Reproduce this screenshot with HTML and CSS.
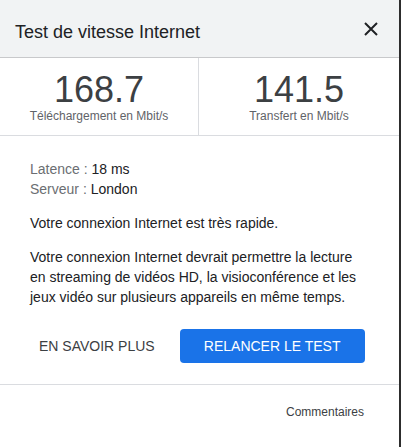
FILE: index.html
```html
<!DOCTYPE html>
<html lang="fr">
<head>
<meta charset="utf-8">
<link rel="stylesheet" href="styles.css">
</head>
<body>
<div class="dialog">
  <header class="head">
    <h1 class="title">Test de vitesse Internet</h1>
    <button class="close" aria-label="Fermer">
      <svg width="14" height="14" viewBox="0 0 14 14"><path d="M1 1L13 13M13 1L1 13" stroke="#202124" stroke-width="2" fill="none"/></svg>
    </button>
  </header>
  <section class="stats">
    <div class="stat">
      <div class="num">168.7</div>
      <div class="unit">Téléchargement en Mbit/s</div>
    </div>
    <div class="stat">
      <div class="num">141.5</div>
      <div class="unit">Transfert en Mbit/s</div>
    </div>
  </section>
  <section class="body">
    <div class="meta">
      <div><span class="lbl">Latence : </span>18 ms</div>
      <div><span class="lbl">Serveur : </span>London</div>
    </div>
    <p class="p">Votre connexion Internet est très rapide.</p>
    <p class="p">Votre connexion Internet devrait permettre la lecture en streaming de vidéos HD, la visioconférence et les jeux vidéo sur plusieurs appareils en même temps.</p>
    <div class="actions">
      <button class="btn-text">EN SAVOIR PLUS</button>
      <button class="btn-primary">RELANCER LE TEST</button>
    </div>
  </section>
  <footer class="foot">
    <span class="feedback">Commentaires</span>
  </footer>
</div>
</body>
</html>
```

FILE: styles.css
```css
* { box-sizing: border-box; }
html, body { margin: 0; padding: 0; background: #fff; }
body {
  font-family: "Liberation Sans", Arial, sans-serif;
  color: #202124;
  width: 401px;
  height: 447px;
  overflow: hidden;
}
.dialog {
  width: 401px;
  height: 447px;
  border-right: 2px solid #2d2d2d;
  display: flex;
  flex-direction: column;
}
.head {
  height: 58px;
  background: #f1f3f4;
  border-bottom: 1px solid #c8c9cb;
  display: flex;
  align-items: center;
  justify-content: space-between;
  padding: 0 21px 0 15px;
}
.title {
  margin: 0;
  font-size: 18px;
  font-weight: normal;
  color: #202124;
  padding-top: 7px;
}
.close {
  border: 0;
  background: none;
  padding: 0;
  width: 14px;
  height: 14px;
  display: block;
  margin-top: 0;
}
.close svg { display: block; }
.stats {
  display: grid;
  grid-template-columns: 199px 1fr;
  height: 78px;
  border-bottom: 1px solid #dadce0;
}
.stat {
  display: flex;
  flex-direction: column;
  align-items: center;
  padding-top: 13px;
}
.stat:first-child { border-right: 1px solid #dadce0; }
.num {
  font-size: 36px;
  line-height: 38px;
  color: #3c4043;
}
.unit {
  font-size: 12px;
  line-height: 14px;
  color: #5f6368;
}
.body {
  padding: 23px 30px 0 30px;
  font-size: 14px;
  line-height: 20px;
  color: #202124;
}
.meta .lbl { color: #6b6e72; }
.p { margin: 14px 0 0 0; }
.actions {
  display: flex;
  align-items: center;
  gap: 25px;
  margin-top: 22px;
  height: 34px;
}
.btn-text {
  border: 0;
  background: none;
  padding: 0 0 0 9px;
  font-family: inherit;
  font-size: 14px;
  color: #3c4043;
}
.btn-primary {
  border: 0;
  background: #1a73e8;
  color: #fff;
  font-family: inherit;
  font-size: 14px;
  width: 185px;
  height: 34px;
  border-radius: 4px;
}
.foot {
  margin-top: 21px;
  border-top: 1px solid #dadce0;
  display: flex;
  justify-content: flex-end;
  padding: 20px 35px 0 0;
}
.feedback {
  font-size: 12px;
  color: #3c4043;
}
```
